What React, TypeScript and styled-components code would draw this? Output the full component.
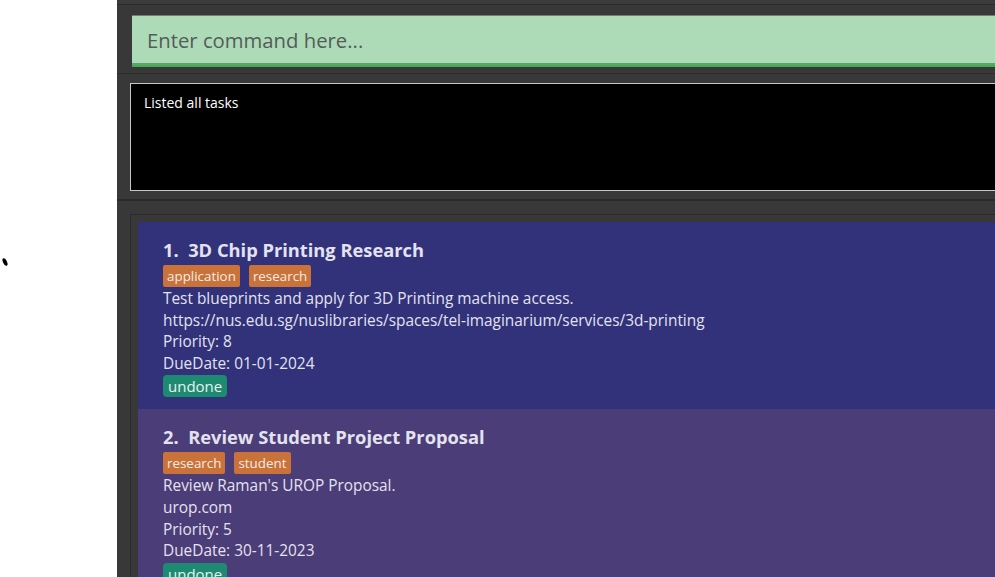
import React from "react";
import styled, { createGlobalStyle } from "styled-components";

const GlobalStyle = createGlobalStyle`
  html, body {
    margin: 0;
    padding: 0;
    background: #ffffff;
    overflow: hidden;
  }
  body {
    font-family: "Open Sans", "Noto Sans", sans-serif;
  }
`;

const Page = styled.div`
  display: flex;
  width: 1100px;
  height: 577px;
  overflow: hidden;
`;

const Gutter = styled.div`
  width: 117px;
  flex: none;
  background: #ffffff;
`;

const Mark = styled.div`
  margin: 258px 0 0 3px;
  width: 4px;
  height: 8px;
  border-radius: 50%;
  background: #000;
  transform: rotate(-25deg);
`;

const Main = styled.div`
  flex: 1;
  display: flex;
  flex-direction: column;
  background: #383838;
  min-height: 0;
`;

const TopStrip = styled.div`
  flex: none;
  height: 4px;
  background: #3b3b3b;
  border-bottom: 1px solid #2c2c2c;
`;

const CommandSection = styled.div`
  flex: none;
  padding: 10px 0 6px 15px;
  border-bottom: 1px solid #2c2c2c;
`;

const CommandInput = styled.div`
  height: 47px;
  border-top: 1px solid #6f7d72;
  border-bottom: 2px solid #5aa867;
  box-shadow: 0 2px 0 #49a856;
  margin-bottom: 2px;
  background: #addbb7;
  display: flex;
  align-items: center;
  padding-left: 15px;
  font-size: 20.3px;
  color: #555b57;
`;

const ResultSection = styled.div`
  flex: none;
  padding: 9px 0 8px 13px;
  border-bottom: 2px solid #2b2b2b;
`;

const ResultBox = styled.div`
  box-sizing: border-box;
  height: 108px;
  background: #000000;
  border: 1px solid #c8c8c8;
  border-right: none;
  padding: 9px 0 0 13px;
  color: #ffffff;
  font-size: 14px;
  line-height: 19px;
`;

const ListSection = styled.div`
  flex: 1;
  min-height: 0;
  overflow: hidden;
  padding: 13px 0 0 13px;
`;

const ListBox = styled.div`
  border: 1px solid #2b2b2b;
  border-right: none;
  border-bottom: none;
  padding: 7px 0 0 7px;
  display: flex;
  flex-direction: column;
`;

const Card = styled.div<{ $bg: string }>`
  flex: none;
  background: ${(p) => p.$bg};
  padding: 14px 0 12px 25px;
  display: flex;
  flex-direction: column;
  align-items: flex-start;
  color: #e4e2ef;
`;

const Title = styled.div`
  font-size: 18.3px;
  font-weight: 700;
  line-height: 28px;
  white-space: pre;
  margin-bottom: 1px;
`;

const TagRow = styled.div`
  display: flex;
  gap: 9px;
  margin-bottom: 1px;
`;

const Tag = styled.span`
  background: #c97239;
  color: #f3ece6;
  font-size: 13.4px;
  height: 22px;
  line-height: 22px;
  padding: 0 4px;
  border-radius: 2px;
`;

const Line = styled.div`
  font-size: 15.4px;
  line-height: 21.6px;
`;

const Status = styled.span`
  margin-top: 1px;
  background: #1f8a72;
  color: #e8f3ef;
  font-size: 15px;
  height: 22px;
  line-height: 22px;
  padding: 0 5px;
  border-radius: 4px;
`;

type Task = {
  title: string;
  tags: string[];
  desc: string;
  url: string;
  priority: number;
  due: string;
  bg: string;
};

const tasks: Task[] = [
  {
    title: "1.  3D Chip Printing Research",
    tags: ["application", "research"],
    desc: "Test blueprints and apply for 3D Printing machine access.",
    url: "https://nus.edu.sg/nuslibraries/spaces/tel-imaginarium/services/3d-printing",
    priority: 8,
    due: "01-01-2024",
    bg: "#31327a",
  },
  {
    title: "2.  Review Student Project Proposal",
    tags: ["research", "student"],
    desc: "Review Raman's UROP Proposal.",
    url: "urop.com",
    priority: 5,
    due: "30-11-2023",
    bg: "#4b3d77",
  },
];

export default function App() {
  return (
    <>
      <GlobalStyle />
      <Page>
        <Gutter>
          <Mark />
        </Gutter>
        <Main>
          <TopStrip />
          <CommandSection>
            <CommandInput>Enter command here...</CommandInput>
          </CommandSection>
          <ResultSection>
            <ResultBox>Listed all tasks</ResultBox>
          </ResultSection>
          <ListSection>
            <ListBox>
              {tasks.map((t) => (
                <Card key={t.title} $bg={t.bg}>
                  <Title>{t.title}</Title>
                  <TagRow>
                    {t.tags.map((tag) => (
                      <Tag key={tag}>{tag}</Tag>
                    ))}
                  </TagRow>
                  <Line>{t.desc}</Line>
                  <Line>{t.url}</Line>
                  <Line>Priority: {t.priority}</Line>
                  <Line>DueDate: {t.due}</Line>
                  <Status>undone</Status>
                </Card>
              ))}
            </ListBox>
          </ListSection>
        </Main>
      </Page>
    </>
  );
}
